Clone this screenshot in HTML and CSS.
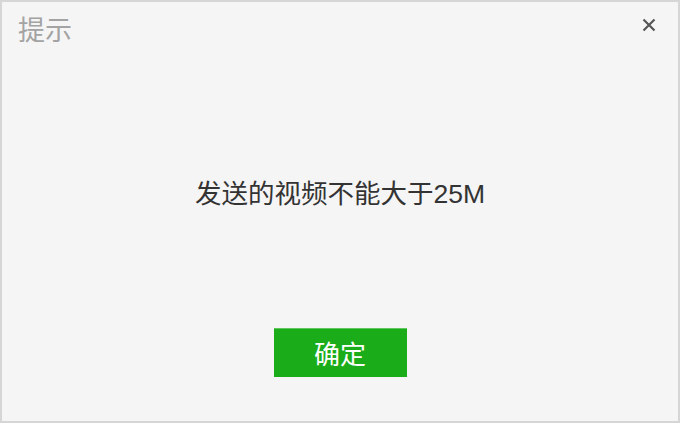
FILE: index.html
```html
<!DOCTYPE html>
<html lang="zh-CN">
<head>
<meta charset="utf-8">
<title>提示</title>
<link rel="stylesheet" href="styles.css">
</head>
<body>
<div class="dialog">
  <div class="header">
    <span class="title">提示</span>
    <span class="close" aria-label="关闭">
      <svg width="14" height="14" viewBox="0 0 14 14"><path d="M1.5 1.5 L12.5 12.5 M12.5 1.5 L1.5 12.5" stroke="#555" stroke-width="2.2" stroke-linecap="butt" fill="none"/></svg>
    </span>
  </div>
  <div class="message">发送的视频不能大于25M</div>
  <div class="actions">
    <button class="ok">确定</button>
  </div>
</div>
</body>
</html>
```
FILE: styles.css
```css
html, body {
  margin: 0;
  padding: 0;
  background: #f5f5f5;
}
.dialog {
  width: 680px;
  height: 423px;
  box-sizing: border-box;
  border: 2px solid #d6d6d6;
  background: #f5f5f5;
  display: flex;
  flex-direction: column;
  font-family: "Liberation Sans", "Noto Sans CJK SC", sans-serif;
}
.header {
  display: flex;
  justify-content: space-between;
  align-items: flex-start;
  padding: 14px 22px 0 16px;
  height: 30px;
}
.title {
  font-size: 27px;
  line-height: 30px;
  color: #a3a3a3;
}
.close {
  display: block;
  width: 14px;
  height: 14px;
  margin-top: 2px;
}
.close svg { display: block; }
.message {
  margin-top: 133px;
  text-align: center;
  font-size: 26.5px;
  line-height: 30px;
  color: #333;
}
.actions {
  display: flex;
  justify-content: center;
  margin-top: 119px;
}
.ok {
  width: 133px;
  height: 49px;
  box-sizing: border-box;
  border: none;
  border-top: 1px solid #5fc75e;
  background: #1aad19;
  color: #fff;
  font-family: "Liberation Sans", "Noto Sans CJK SC", sans-serif;
  font-size: 26px;
  line-height: 44px;
  padding: 4px 0 0 0;
}
```
